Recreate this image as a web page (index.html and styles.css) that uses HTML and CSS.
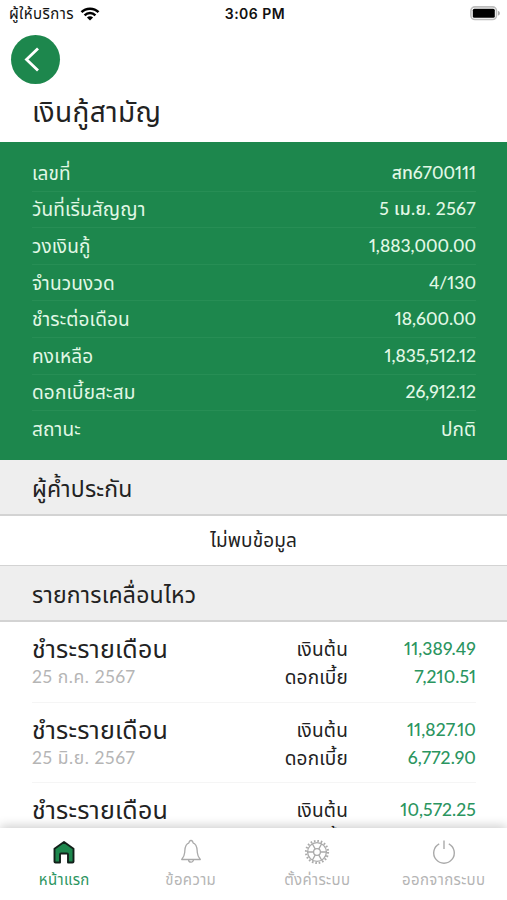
FILE: index.html
```html
<!DOCTYPE html>
<html lang="th">
<head>
    <meta charset="UTF-8">
    <title>เงินกู้สามัญ</title>
    <link rel="stylesheet" href="styles.css">
</head>
<body>
<div class="phone">
    <div class="status">
        <div class="carrier">
            <span>ผู้ให้บริการ</span>
            <svg width="20" height="14" viewBox="0 0 20 14">
                <path d="M1.500 5.200C6 .6 14 .6 18.500 5.200" fill="none" stroke="#000" stroke-width="2.500"/>
                <path d="M4.600 8.300C7.600 5.300 12.400 5.300 15.400 8.300" fill="none" stroke="#000" stroke-width="2.400"/>
                <path d="M10 13.500L6.900 10.500C8.600 8.900 11.400 8.900 13.100 10.500Z"/>
            </svg>
        </div>
        <div class="clock">3:06 PM</div>
        <svg class="battery" width="31" height="15" viewBox="0 0 31 15">
            <rect x=".9" y=".9" width="25.600" height="12.600" rx="4" fill="#fff" stroke="#bdbdbd" stroke-width="1.600"/>
            <rect x="2.800" y="2.800" width="22" height="9" rx="1.500"/>
            <path d="M28 5c2.500.5 2.500 4 0 4.500z" fill="#aaa"/>
        </svg>
    </div>
    <div class="head">
        <div class="back">
            <svg width="49" height="49" viewBox="0 0 49 49">
                <path d="M27 13.500L15.500 24.500L27 35.500" fill="none" stroke="#fff" stroke-width="2.800"/>
            </svg>
        </div>
        <h1>เงินกู้สามัญ</h1>
    </div>
    <ul class="summary">
        <li><span>เลขที่</span><b>สท6700111</b></li>
        <li><span>วันที่เริ่มสัญญา</span><b class="date">5 เม.ย. 2567</b></li>
        <li><span>วงเงินกู้</span><b>1,883,000.00</b></li>
        <li><span>จำนวนงวด</span><b>4/130</b></li>
        <li><span>ชำระต่อเดือน</span><b>18,600.00</b></li>
        <li><span>คงเหลือ</span><b>1,835,512.12</b></li>
        <li><span>ดอกเบี้ยสะสม</span><b>26,912.12</b></li>
        <li><span>สถานะ</span><b class="word">ปกติ</b></li>
    </ul>
    <h2>ผู้ค้ำประกัน</h2>
    <div class="empty">ไม่พบข้อมูล</div>
    <h2>รายการเคลื่อนไหว</h2>
    <ul class="moves">
        <li>
            <div class="what"><h3>ชำระรายเดือน</h3><p>25 ก.ค. 2567</p></div>
            <div class="label"><p>เงินต้น</p><p>ดอกเบี้ย</p></div>
            <div class="money"><p>11,389.49</p><p>7,210.51</p></div>
        </li>
        <li>
            <div class="what"><h3>ชำระรายเดือน</h3><p>25 มิ.ย. 2567</p></div>
            <div class="label"><p>เงินต้น</p><p>ดอกเบี้ย</p></div>
            <div class="money"><p>11,827.10</p><p>6,772.90</p></div>
        </li>
        <li>
            <div class="what"><h3>ชำระรายเดือน</h3></div>
            <div class="label"><p>เงินต้น</p><p>ดอกเบี้ย</p></div>
            <div class="money"><p>10,572.25</p></div>
        </li>
    </ul>
    <div class="nav">
        <div class="item active">
            <svg width="26" height="26" viewBox="0 0 26 26">
                <path d="M3.500 9.800L13 3L22.500 9.800V22.700Q22.500 23.500 21.500 23.500H17V15.500Q17 14.500 16 14.500H10Q9 14.500 9 15.500V23.500H4.500Q3.500 23.500 3.500 22.700Z" fill="#1d874d" stroke="#12201a" stroke-width="1.900" stroke-linejoin="round"/>
            </svg>
            <span>หน้าแรก</span>
        </div>
        <div class="item">
            <svg width="26" height="26" viewBox="0 0 26 26">
                <g fill="none" stroke="#aaa" stroke-width="1.300" stroke-linejoin="round">
                    <path d="M11.200 3.800C6.500 5 7 10 6.700 13.500C6.500 17 5.300 18.500 3.700 20.500H22.300C20.700 18.500 19.500 17 19.300 13.500C19 10 19.500 5 14.800 3.800"/>
                    <path d="M11.200 4a1.900 1.900 0 1 1 3.600 0M10.500 20.500a2.500 2.700 0 0 0 5 0"/>
                </g>
            </svg>
            <span>ข้อความ</span>
        </div>
        <div class="item">
            <svg width="26" height="26" viewBox="0 0 26 26">
                <g fill="none" stroke="#aaa">
                    <circle cx="13" cy="13" r="11" stroke-width="2.200" stroke-dasharray="1.600 1.856"/>
                    <circle cx="13" cy="13" r="9.400" stroke-width="1.300"/>
                    <circle cx="13" cy="13" r="3.400" stroke-width="1.300"/>
                    <path d="M16.400 13H22.500M14.700 15.900L17.700 21.200M11.300 15.900L8.300 21.200M9.600 13H3.500M11.300 10.100L8.300 4.800M14.700 10.100L17.700 4.800" stroke-width="1.300"/>
                </g>
            </svg>
            <span>ตั้งค่าระบบ</span>
        </div>
        <div class="item">
            <svg width="26" height="26" viewBox="0 0 26 26">
                <path d="M8.200 4.800A10.300 10.300 0 1 0 17.800 4.800M13 1.500V10" fill="none" stroke="#aaa" stroke-width="1.400"/>
            </svg>
            <span>ออกจากระบบ</span>
        </div>
    </div>
</div>
</body>
</html>
```
FILE: styles.css
```css
*{
    margin: 0;
    padding: 0;
    box-sizing: border-box;
}
body{
    font-family: Lato, "Noto Sans Thai", "Noto Sans", sans-serif;
    font-variant-numeric: proportional-nums;
    background-color: #fff;
    color: #222;
}
ul{
    list-style: none;
}
.phone{
    width: 507px;
    height: 900px;
    overflow: hidden;
    display: flex;
    flex-direction: column;
    position: relative;
}
.status{
    height: 28px;
    flex: none;
    display: grid;
    grid-template-columns: 1fr auto 1fr;
    align-items: center;
    padding: 0 6px 1px 9px;
}
.carrier{
    display: flex;
    align-items: center;
    gap: 6px;
    font-size: 15px;
    letter-spacing: .4px;
    line-height: 25px;
    white-space: nowrap;
    color: #111;
}
.clock{
    font: 600 14px Inter, sans-serif;
    letter-spacing: .5px;
    color: #111;
}
.battery{
    justify-self: end;
}
.head{
    height: 114px;
    flex: none;
    padding: 7px 11px 0;
}
.back{
    width: 49px;
    height: 49px;
    border-radius: 50%;
    background-color: #1d874d;
}
h1{
    padding: 6px 21px 0;
    font-size: 28px;
    letter-spacing: .4px;
    font-weight: 400;
    line-height: 42px;
    white-space: nowrap;
}
.summary{
    flex: none;
    height: 318px;
    padding: 13px 31px 0 32px;
    background-color: #1d874d;
    color: #e2f8e6;
}
.summary li{
    height: 36.6px;
    display: flex;
    justify-content: space-between;
    align-items: center;
    border-bottom: 1px solid #278e55;
    font-size: 19px;
    letter-spacing: .15px;
    line-height: 36px;
}
.summary li:last-child{
    border-bottom: 0;
}
.summary b{
    font-size: 17.5px;
    font-weight: 500;
    letter-spacing: 0;
}
.summary .date{
    letter-spacing: .4px;
}
.summary .word{
    font-size: 19px;
    font-weight: 400;
}
h2{
    flex: none;
    height: 56px;
    padding: 0 32px;
    background-color: #eee;
    border-bottom: 2px solid #d3d3d3;
    font-size: 23px;
    letter-spacing: .2px;
    font-weight: 400;
    line-height: 56px;
}
.empty{
    flex: none;
    height: 50px;
    border-bottom: 1px solid #d3d3d3;
    text-align: center;
    font-size: 19px;
    letter-spacing: .1px;
    line-height: 48px;
}
.moves{
    padding: 0 31px 0 32px;
}
.moves li{
    height: 80.5px;
    padding-top: 13px;
    display: grid;
    grid-template-columns: 1fr 90px 128px;
    border-bottom: 1px solid #f5f5f5;
    font-size: 19px;
    line-height: 28px;
    white-space: nowrap;
}
.moves h3{
    font-size: 25px;
    letter-spacing: .2px;
    font-weight: 400;
    line-height: 27px;
    padding-bottom: 1px;
}
.what p{
    color: #b5b5b5;
    font-size: 17.5px;
    letter-spacing: .6px;
}
.label, .money{
    text-align: right;
}
.label{
    letter-spacing: .2px;
}
.money{
    color: #2b9560;
    font-size: 17.5px;
    font-weight: 500;
    letter-spacing: .1px;
}
.nav{
    position: absolute;
    left: 0;
    bottom: 0;
    width: 100%;
    height: 72px;
    padding: 11px 0 0 1px;
    display: grid;
    grid-template-columns: repeat(4, 1fr);
    background-color: #fff;
    box-shadow: 0 -2px 10px rgba(0, 0, 0, .2);
}
.item{
    display: flex;
    flex-direction: column;
    align-items: center;
    color: #b5b5b5;
    font-size: 15px;
    letter-spacing: .35px;
    line-height: 28px;
    white-space: nowrap;
}
.item.active{
    color: #2b9560;
}
```
